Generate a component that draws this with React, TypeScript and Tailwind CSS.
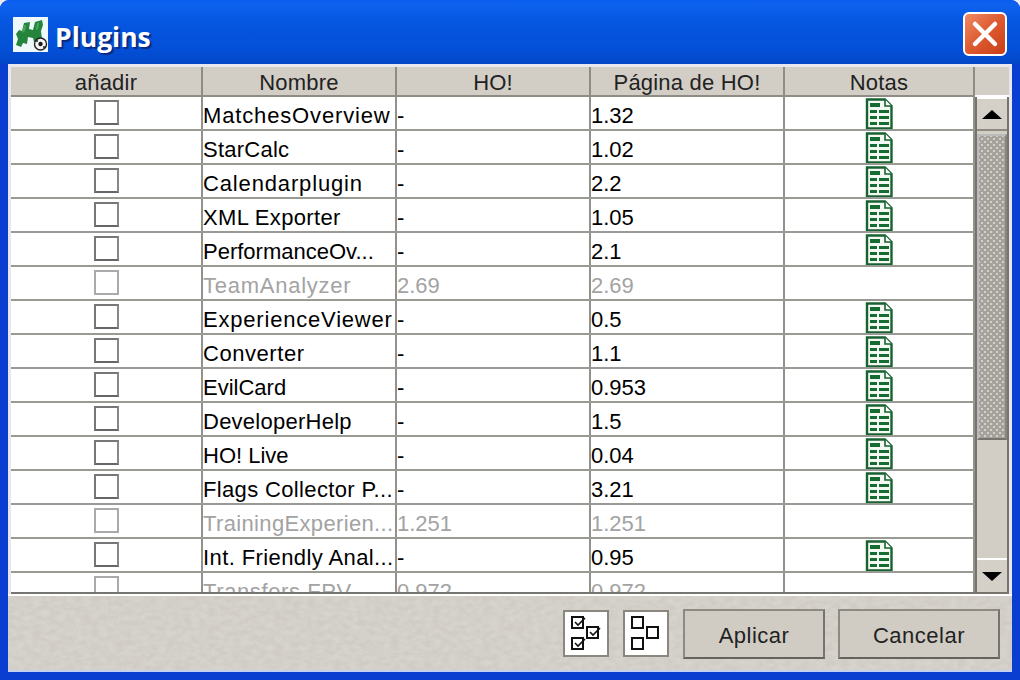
const rows: [string, string, string, boolean, string][] = [
  ["MatchesOverview", "-", "1.32", true, "tracking-[0.85px]"],
  ["StarCalc", "-", "1.02", true, "tracking-[0.25px]"],
  ["Calendarplugin", "-", "2.2", true, "tracking-[0.85px]"],
  ["XML Exporter", "-", "1.05", true, "tracking-[0.33px]"],
  ["PerformanceOv...", "-", "2.1", true, "tracking-[0px]"],
  ["TeamAnalyzer", "2.69", "2.69", false, "tracking-[0.75px]"],
  ["ExperienceViewer", "-", "0.5", true, "tracking-[0.8px]"],
  ["Converter", "-", "1.1", true, "tracking-[0.55px]"],
  ["EvilCard", "-", "0.953", true, "tracking-[0px]"],
  ["DeveloperHelp", "-", "1.5", true, "tracking-[0.25px]"],
  ["HO! Live", "-", "0.04", true, "tracking-[0px]"],
  ["Flags Collector P...", "-", "3.21", true, "tracking-[0.35px]"],
  ["TrainingExperien...", "1.251", "1.251", false, "tracking-[0.35px]"],
  ["Int. Friendly Anal...", "-", "0.95", true, "tracking-[0.4px]"],
  ["Transfers FPV", "0.972", "0.972", false, "tracking-[0.6px]"],
];

function NoteIcon() {
  return (
    <svg width="28" height="32" viewBox="0 0 28 32">
      <path d="M2 1.5H20L26.5 8V30.5H2Z" fill="#f4faf2" stroke="#176230" strokeWidth="2.4" />
      <path d="M20 1.5V8H26.5" fill="#fff" stroke="#176230" strokeWidth="1.6" />
      <rect x="5" y="5" width="10" height="4" fill="#146c32" />
      <rect x="5" y="12" width="7" height="3" fill="#146c32" />
      <rect x="14" y="12" width="10" height="3" fill="#146c32" />
      <rect x="5" y="18" width="7" height="3" fill="#146c32" />
      <rect x="14" y="18" width="10" height="3" fill="#146c32" />
      <rect x="5" y="24" width="7" height="3" fill="#146c32" />
      <rect x="14" y="24" width="10" height="3" fill="#146c32" />
    </svg>
  );
}

function Logo() {
  return (
    <svg width="35" height="35" viewBox="0 0 35 35" className="shrink-0">
      <rect width="35" height="35" fill="#eef8fb" />
      <path d="M3 17L6 13L9 14L11 6L17 5L16 12L20 13L22 5L29 3L30 8L28 14L29 22L25 26L21 25L20 21L15 20L14 27L10 26L8 30L3 28L5 22Z" fill="#24843c" />
      <path d="M11 8L13 8L12 14L9 16ZM24 6L26 6L25 12L23 13Z" fill="#4aa65a" />
      <circle cx="27.5" cy="27" r="6" fill="#f4f4f4" stroke="#222" strokeWidth="1.4" />
      <circle cx="27.5" cy="27" r="2.2" fill="#1a1a1a" />
      <circle cx="24" cy="24" r="1" fill="#1a1a1a" />
      <circle cx="31" cy="30" r="1" fill="#1a1a1a" />
    </svg>
  );
}

function CheckBox({ on }: { on: boolean }) {
  return (
    <div className={on ? "w-[25px] h-[25px] border-2 border-t-[#777] border-l-[#777] border-r-[#888] border-b-[#666] bg-white" : "w-[25px] h-[25px] border-2 border-[#aaa] bg-white"} />
  );
}

function GroupButton({ checked }: { checked: boolean }) {
  const boxes = [
    [1, 1],
    [16, 11],
    [1, 22],
  ];
  return (
    <div className="w-[46px] h-[47px] bg-white border-2 border-[#8a8780] flex items-center justify-center">
      <svg width="30" height="36" viewBox="0 0 30 36">
        {boxes.map(([x, y]) => (
          <g key={x * 100 + y}>
            <rect x={x} y={y} width="11" height="11" fill="#fff" stroke="#111" strokeWidth="2" />
            {checked && <path d={`M${x + 3} ${y + 5}L${x + 6} ${y + 8}L${x + 13} ${y + 1}`} fill="none" stroke="#111" strokeWidth="1.6" />}
          </g>
        ))}
      </svg>
    </div>
  );
}

function ActionButton({ label, width }: { label: string; width: string }) {
  return (
    <div className={`${width} h-[50px] pt-[3px] bg-[#d0ccc4] border-2 border-t-[#8d8a84] border-l-[#8d8a84] border-r-[#77746e] border-b-[#66635e] flex items-center justify-center text-[22px] tracking-[0.5px] text-[#222]`}>
      {label}
    </div>
  );
}

export default function App() {
  const cell = "border-r-2 border-[#92928c] h-full overflow-hidden whitespace-nowrap";
  return (
    <div className="w-[1020px] h-[680px] bg-[#e8e8f0]">
      <div className="w-full h-full rounded-t-[9px] flex flex-col overflow-hidden bg-[#0a3ed0] font-['Liberation_Sans',Arial,sans-serif]">
        <div className="h-[64px] shrink-0 flex items-center justify-between pl-[13px] pr-[13px] pt-[4px] bg-[linear-gradient(180deg,#0a5cf0_0%,#0d62ee_8%,#0657e2_30%,#0450d8_75%,#0347c8_100%)]">
          <div className="flex items-center gap-[7px]">
            <Logo />
            <span className="mt-[6px] text-white text-[26.5px] font-bold leading-none [font-family:'Open_Sans',sans-serif] [text-shadow:2px_2px_1px_#0a2a80]">Plugins</span>
          </div>
          <div className="w-[44px] h-[44px] rounded-[6px] border-2 border-white bg-[linear-gradient(135deg,#ee8a66,#dd5a30_50%,#c93f18)] flex items-center justify-center">
            <svg width="30" height="30" viewBox="0 0 30 30">
              <path d="M5 5L25 25M25 5L5 25" stroke="#fff" strokeWidth="4.5" strokeLinecap="round" />
            </svg>
          </div>
        </div>
        <div className="flex-1 mx-[8px] flex flex-col bg-[#e6e8ee] min-h-0 border-b-2 border-[#c4d0ee]">
          <div className="h-[530px] shrink-0 pt-[3px] pl-[3px] pr-[3px] flex">
            <div className="flex-1 flex flex-col overflow-hidden min-w-0">
              <div className="h-[30px] shrink-0 grid grid-cols-[192px_194px_194px_194px_190px] bg-[#d2cec6] border-b-2 border-[#8f8c85] text-[22px] tracking-[0.2px] text-[#222] text-center leading-[32px]">
                <div className="border-r-2 border-[#8f8c85]">añadir</div>
                <div className="border-r-2 border-[#8f8c85]">Nombre</div>
                <div className="border-r-2 border-[#8f8c85]">HO!</div>
                <div className="border-r-2 border-[#8f8c85]">Página de HO!</div>
                <div className="border-r-2 border-[#8f8c85]">Notas</div>
              </div>
              <div className="flex-1 overflow-hidden bg-white border-b-2 border-[#77756f] min-h-0">
                {rows.map((r) => (
                  <div key={r[0]} className={`h-[34px] grid grid-cols-[192px_194px_194px_194px_190px] border-b-2 border-[#9a9a94] text-[22px] leading-[38px] ${r[3] ? "text-black" : "text-[#a3a3a3]"}`}>
                    <div className={`${cell} flex justify-center pt-[3px]`}><CheckBox on={r[3]} /></div>
                    <div className={`${cell} ${r[4]}`}>{r[0]}</div>
                    <div className={cell}>{r[1]}</div>
                    <div className={cell}>{r[2]}</div>
                    <div className={`${cell} flex justify-center pt-px`}>{r[3] && <NoteIcon />}</div>
                  </div>
                ))}
              </div>
            </div>
            <div className="w-[34px] shrink-0 flex flex-col">
              <div className="h-[30px] shrink-0 bg-[#d2cec6] border-b-2 border-white" />
              <div className="flex-1 min-h-0 flex flex-col bg-[#d2cec6] border-l-2 border-r-2 border-b-2 border-[#77746e]">
                <div className="h-[34px] shrink-0 bg-[#d4d0c8] border-t-2 border-t-white border-b-2 border-b-[#8d8a84] flex items-center justify-center">
                  <div className="w-0 h-0 border-x-[10px] border-x-transparent border-b-[9px] border-b-black" />
                </div>
                <div className="h-[306px] shrink-0 mt-[3px] border-2 border-t-[#bbb] border-l-[#bbb] border-r-[#8a8780] border-b-[#77746e] bg-[#a5a29b] bg-[radial-gradient(#d2d0ca_1.1px,transparent_1.5px),radial-gradient(#d2d0ca_1.1px,transparent_1.5px)] bg-[length:6px_6px] bg-[position:0_0,3px_3px]" />
                <div className="flex-1" />
                <div className="h-[34px] shrink-0 bg-[#d4d0c8] border-t-2 border-t-white flex items-center justify-center">
                  <div className="w-0 h-0 border-x-[10px] border-x-transparent border-t-[9px] border-t-black" />
                </div>
              </div>
            </div>
          </div>
          <div className="flex-1 relative bg-[#d0ccc5] border-t-2 border-white flex items-center justify-end gap-[14px] pr-[12px] pt-[1px] overflow-hidden">
            <svg className="absolute inset-0 w-full h-full pointer-events-none" aria-hidden="true">
              <filter id="grain">
                <feTurbulence type="fractalNoise" baseFrequency="0.12 0.2" numOctaves="3" seed="4" />
                <feColorMatrix values="0 0 0 0 1  0 0 0 0 1  0 0 0 0 1  0.9 0 0 0 -0.25" />
              </filter>
              <rect width="100%" height="100%" filter="url(#grain)" opacity="0.35" />
            </svg>
            <div className="relative flex items-center gap-[14px]">
              <GroupButton checked />
              <GroupButton checked={false} />
            </div>
            <div className="relative flex items-center gap-[13px]">
              <ActionButton label="Aplicar" width="w-[142px]" />
              <ActionButton label="Cancelar" width="w-[162px]" />
            </div>
          </div>
        </div>
        <div className="h-[8px] shrink-0 bg-[#0a3ed0]" />
      </div>
    </div>
  );
}
